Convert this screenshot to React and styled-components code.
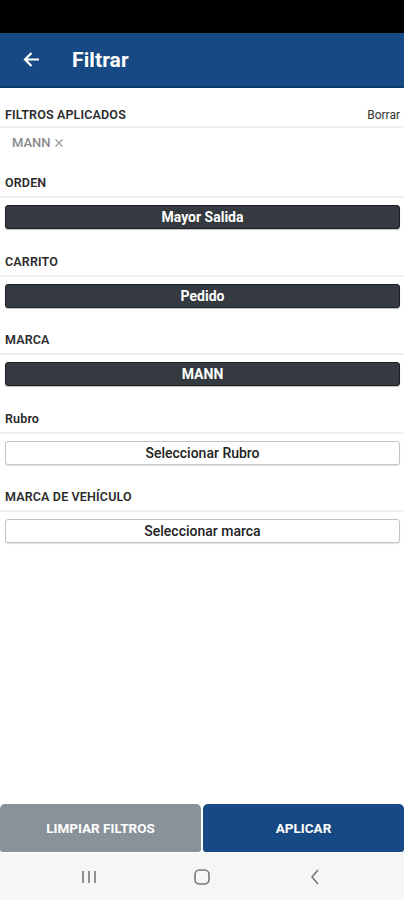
import React from 'react';
import styled, { createGlobalStyle } from 'styled-components';

const GlobalStyle = createGlobalStyle`
  html, body {
    margin: 0;
    padding: 0;
    background: #ffffff;
    font-family: Roboto, "Liberation Sans", Arial, sans-serif;
  }
  * { box-sizing: border-box; }
`;

const Screen = styled.div`
  display: flex;
  flex-direction: column;
  height: 100vh;
  width: 100%;
  background: #fff;
`;

const StatusBar = styled.div`
  height: 33px;
  background: #000;
  flex-shrink: 0;
`;

const AppBar = styled.header`
  height: 55px;
  background: #174a84;
  border-bottom: 2px solid #0f3a6c;
  display: flex;
  align-items: center;
  padding-left: 23px;
  flex-shrink: 0;
  h1 {
    margin: 0 0 0 32px;
    color: #fff;
    font-size: 21px;
    font-weight: 700;
    letter-spacing: 0.1px;
  }
`;

const Content = styled.main`
  flex: 1;
  display: flex;
  flex-direction: column;
`;

const AppliedRow = styled.div`
  display: flex;
  justify-content: space-between;
  align-items: center;
  padding: 20px 4px 4px 5px;
  border-bottom: 2px solid #efefef;
`;

const Label = styled.span`
  display: block;
  font-size: 12.5px;
  line-height: 14px;
  font-weight: 600;
  letter-spacing: 0.15px;
  color: #2b2b2b;
  text-transform: ${p => (p.$plain ? 'none' : 'uppercase')};
`;

const ClearLink = styled.span`
  display: block;
  font-size: 12px;
  line-height: 14px;
  color: #333;
`;

const Tags = styled.div`
  display: flex;
  padding: 8px 12px 2px;
`;

const Tag = styled.span`
  display: flex;
  align-items: center;
  gap: 3px;
  font-size: 13px;
  line-height: 14px;
  font-weight: 500;
  color: #8a8a8a;
`;

const Section = styled.section`
  margin-top: 25.5px;
  &:first-of-type {
    margin-top: 24px;
  }
`;

const SectionHead = styled.div`
  padding: 0 5px 6px;
  border-bottom: 2px solid #efefef;
`;

const SelectButton = styled.button`
  display: block;
  width: calc(100% - 9px);
  margin: 7px 4px 0 5px;
  height: 24px;
  border-radius: 3px;
  font-family: Roboto, "Liberation Sans", Arial, sans-serif;
  font-size: 14px;
  line-height: 20px;
  padding: 0;
  cursor: pointer;
  background: ${p => (p.$active ? '#343a40' : '#fff')};
  color: ${p => (p.$active ? '#fff' : '#222')};
  border: 1px solid ${p => (p.$active ? '#1d2024' : '#c4c4c4')};
  font-weight: ${p => (p.$active ? 700 : 500)};
  box-shadow: ${p => (p.$active ? '0 1px 1px rgba(0,0,0,0.25)' : '0 1px 1px rgba(0,0,0,0.12)')};
`;

const Footer = styled.div`
  display: grid;
  grid-template-columns: 1fr 1fr;
  gap: 2px;
  height: 48px;
  flex-shrink: 0;
  margin-bottom: 1px;
`;

const FooterButton = styled.button`
  border: none;
  border-radius: 5px 5px 3px 3px;
  background: ${p => (p.$primary ? '#174a84' : '#899299')};
  color: #fff;
  font-family: Roboto, "Liberation Sans", Arial, sans-serif;
  font-size: 13.5px;
  font-weight: 700;
  cursor: pointer;
`;

const NavBar = styled.nav`
  height: 47px;
  background: #f6f6f6;
  display: flex;
  justify-content: center;
  align-items: center;
  gap: 89px;
  flex-shrink: 0;
`;

const NavItem = styled.span`
  width: 24px;
  display: flex;
  justify-content: center;
`;

const BackArrow = () => (
  <svg width="17" height="17" viewBox="0 0 17 17" fill="none">
    <path d="M16 8.5H2.5M8.5 2L2 8.5L8.5 15" stroke="#fff" strokeWidth="2.2" />
  </svg>
);

const filters = [
  { title: 'Orden', value: 'Mayor Salida', active: true },
  { title: 'Carrito', value: 'Pedido', active: true },
  { title: 'Marca', value: 'MANN', active: true },
  { title: 'Rubro', value: 'Seleccionar Rubro', plain: true },
  { title: 'Marca de vehículo', value: 'Seleccionar marca' },
];

const App = () => (
  <Screen>
    <GlobalStyle />
    <StatusBar />
    <AppBar>
      <BackArrow />
      <h1>Filtrar</h1>
    </AppBar>
    <Content>
      <AppliedRow>
        <Label>Filtros aplicados</Label>
        <ClearLink>Borrar</ClearLink>
      </AppliedRow>
      <Tags>
        <Tag>
          MANN
          <svg width="10" height="10" viewBox="0 0 10 10">
            <path d="M1.5 1.5l7 7M8.5 1.5l-7 7" stroke="#9a9a9a" strokeWidth="1.2" />
          </svg>
        </Tag>
      </Tags>
      {filters.map(f => (
        <Section key={f.title}>
          <SectionHead>
            <Label $plain={f.plain}>{f.title}</Label>
          </SectionHead>
          <SelectButton $active={f.active}>{f.value}</SelectButton>
        </Section>
      ))}
    </Content>
    <Footer>
      <FooterButton>LIMPIAR FILTROS</FooterButton>
      <FooterButton $primary>APLICAR</FooterButton>
    </Footer>
    <NavBar>
      <NavItem>
        <svg width="18" height="16" viewBox="0 0 18 16">
          <path d="M3 2v12M9 2v12M15 2v12" stroke="#777" strokeWidth="1.6" />
        </svg>
      </NavItem>
      <NavItem>
        <svg width="18" height="18" viewBox="0 0 18 18">
          <rect x="2" y="2" width="14" height="14" rx="4.5" fill="none" stroke="#777" strokeWidth="1.6" />
        </svg>
      </NavItem>
      <NavItem>
        <svg width="12" height="18" viewBox="0 0 12 18">
          <path d="M9 2L3 9l6 7" fill="none" stroke="#777" strokeWidth="1.6" />
        </svg>
      </NavItem>
    </NavBar>
  </Screen>
);

export default App;
